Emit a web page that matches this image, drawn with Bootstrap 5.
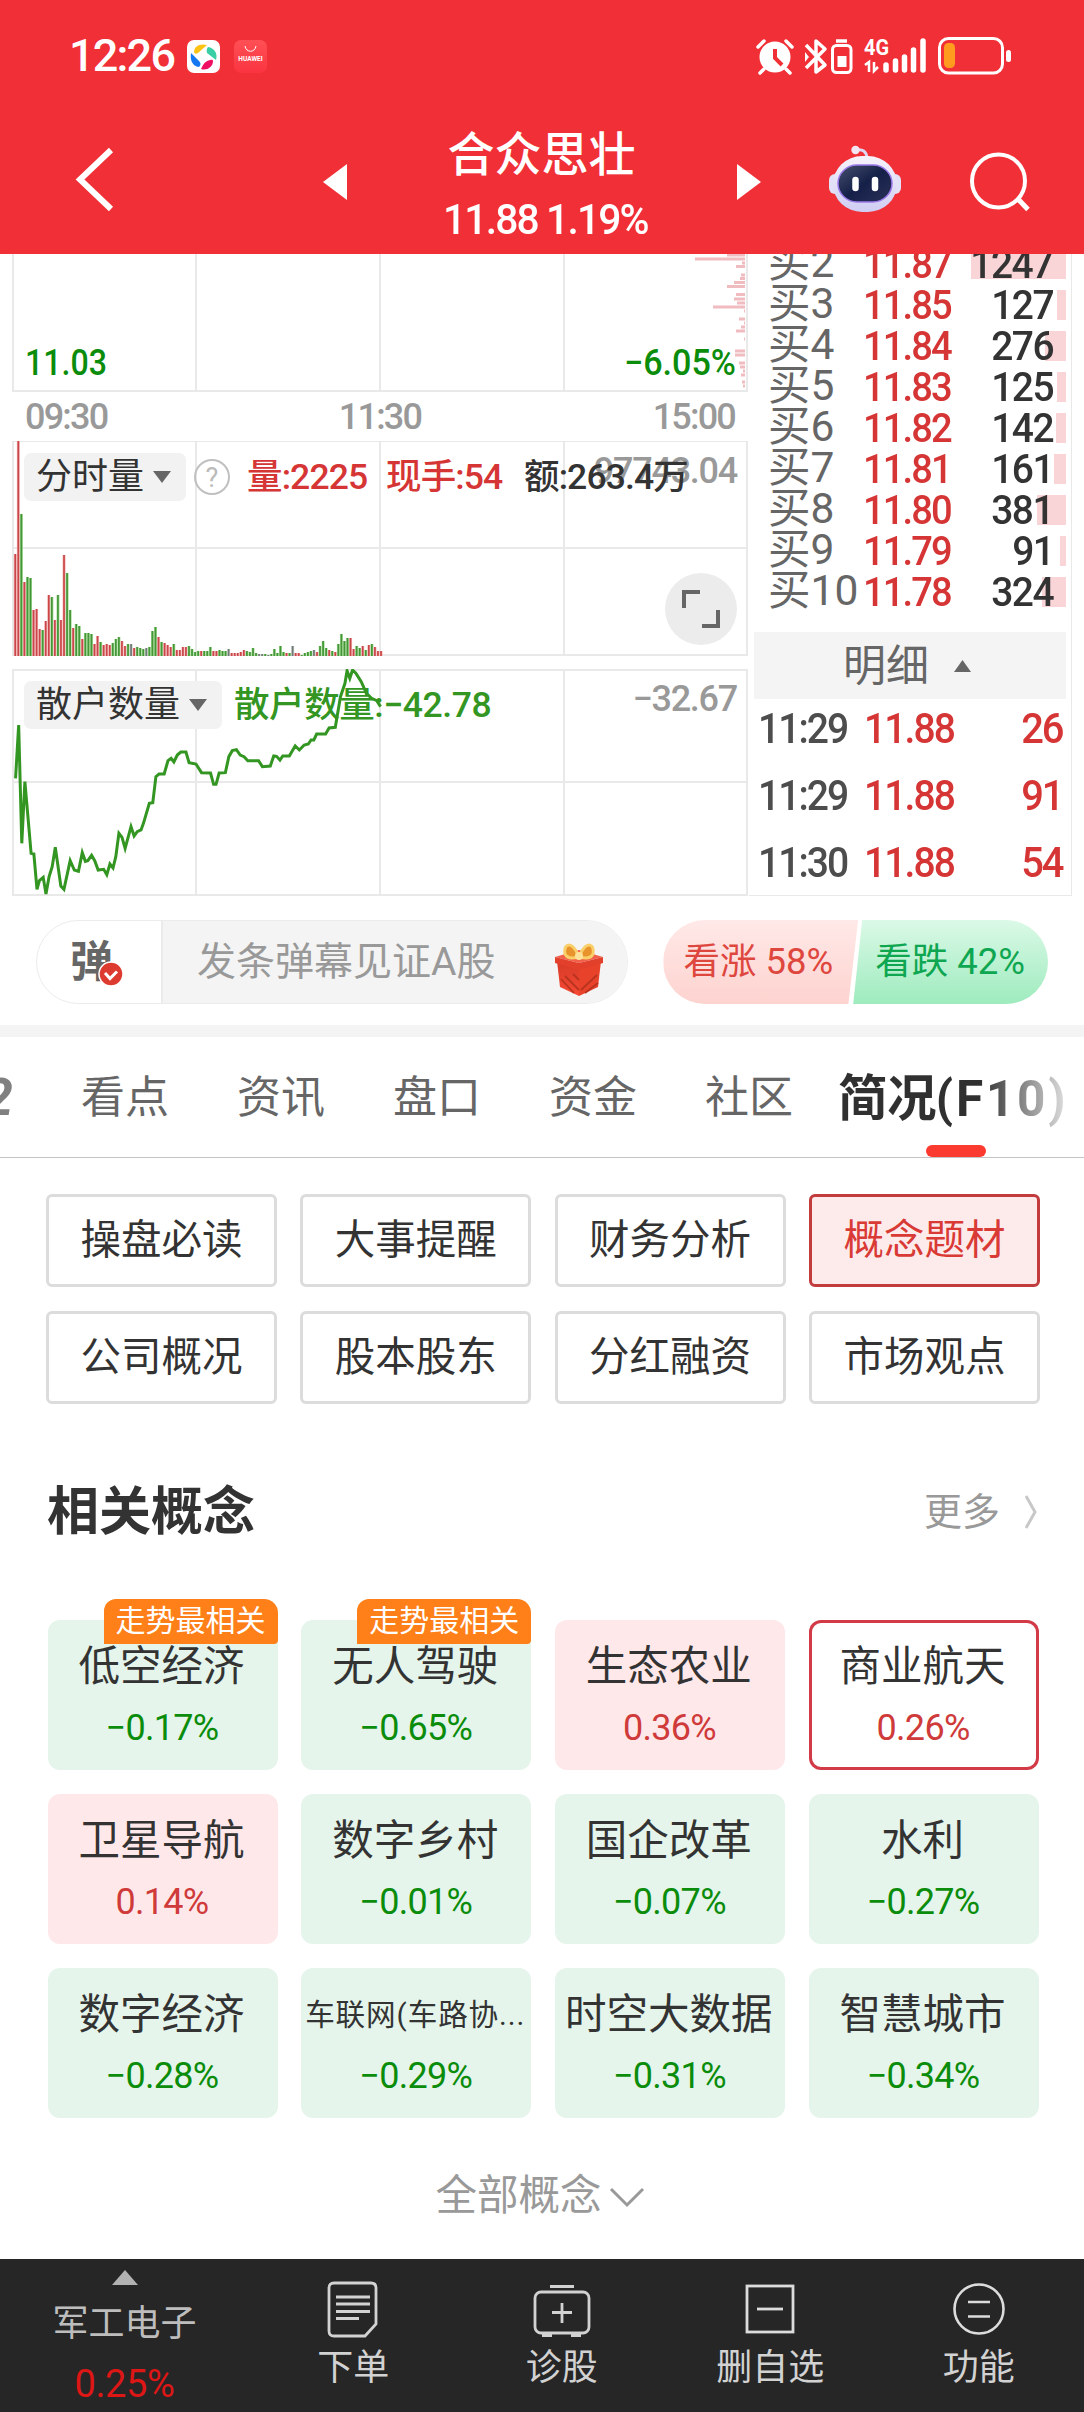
<!DOCTYPE html>
<html lang="zh-CN">
<head>
<meta charset="utf-8">
<meta name="viewport" content="width=device-width, initial-scale=1">
<title>合众思壮</title>
<link href="https://cdn.jsdelivr.net/npm/bootstrap@5.3.0/dist/css/bootstrap.min.css" rel="stylesheet">
<style>
body{width:1084px;height:2412px;overflow:hidden;background:#fff;color:#333;font-family:Roboto,"Noto Sans CJK SC",sans-serif;line-height:1}
svg{display:block;flex:none}
.cn{font-family:Roboto,"Noto Sans CJK SC",sans-serif;white-space:nowrap}
.din{font-weight:500;letter-spacing:-.05em;white-space:nowrap}
.top-red{background:#f12f36;height:254px;color:#fff;position:relative;z-index:2}
.status{height:112px;padding:0 72px 0 69px}
.clock{font-size:45px;line-height:114px;letter-spacing:-.04em;font-weight:500;width:118px}
.hw{width:33px;height:33px;border-radius:7px;background:linear-gradient(#ff5055,#fa3440);font-size:6.5px;font-weight:700;margin-left:14px;padding-top:16px;text-align:center}
.hw svg{position:absolute;left:10px;top:5px}
.navrow{height:142px}
.stock{font-size:47px;line-height:62px;font-weight:500;padding-top:12px}
.quote{font-size:42px;line-height:50px;letter-spacing:-.045em;padding-top:9px;transform:scaleX(.97)}
.market{height:642px}
.chartcol{width:749px}
.bookcol{width:323px;border-right:1px solid #e9e9e9;border-bottom:1px solid #e9e9e9;height:642px;overflow:hidden}
.axis{height:49px;color:#999;font-size:36px;line-height:50px;padding:0 14px 0 25px}
.overlay-row{position:absolute;left:24px;right:12px}
.pickr{height:48px;background:#f2f2f2;border-radius:7px;font-size:36px;line-height:50px;padding:0 15px 0 12px}
.pickr svg{margin-left:9px}
.c-red{color:#d63535}.c-green{color:#0b8c0b}.c-line{color:#349622}.c-gray{color:#999}
.vol{font-size:35.5px;line-height:50px;letter-spacing:-.025em}
.vol.c-line{letter-spacing:-.012em}
.bigval{position:absolute;right:12px;font-size:36px;line-height:40px;color:#999;letter-spacing:-.035em}
.nar{display:inline-block;transform:scaleX(.93);transform-origin:left center}
.narr{display:inline-block;transform:scaleX(.95);transform-origin:right center}
.bk{height:41px;line-height:41px;font-size:41px;padding:0 18px 0 19px;position:relative}
.bk .lv{width:95px;color:#666;font-weight:400;font-size:42.5px;letter-spacing:0;line-height:37px}
.bk .qty{margin-left:auto;z-index:1;letter-spacing:-.04em}
.bk .depth{position:absolute;right:5px;top:5px;height:30px;background:#f9d5d7}
.detail{height:67px;margin:19px 5px 0 5px;background:#f4f4f4;font-size:43px;color:#666;line-height:66px;padding-right:4px}
.tick{height:67px;line-height:60px;font-size:42px;padding:0 8px 0 9px;color:#4d4d4d}
.tick .px{width:106px;flex:none}
.danmu{height:129px;padding:24px 36px 0 36px}
.dm{width:593px;height:84px;border:1px solid #ececec;border-radius:42px;overflow:hidden}
.dm-l{width:126px;border-right:2px solid #ebebeb;font-size:43px;font-weight:700;color:#666;position:relative;padding:3px 0 0 33px;line-height:76px}
.dm-l svg{position:absolute;left:61px;top:40px}
.dm-r{flex:1;background:#f4f4f4;color:#999;font-size:39px;line-height:83px;padding-left:34px}
.vote{width:385px;height:84px;margin-left:35px;border-radius:42px;overflow:hidden;font-size:36.5px;line-height:83px}
.up,.dn{padding-left:20px}
.up{width:195px;color:#de473e;background:linear-gradient(#ffe9e8,#fdd3cf);clip-path:polygon(0 0,100% 0,185px 100%,0 100%)}
.dn{width:195px;margin-left:-5px;color:#0ea650;background:linear-gradient(#dbf9e7,#9eebbe);clip-path:polygon(9px 0,100% 0,100% 100%,0 100%);padding-left:22px}
.band{height:12px;background:#f4f4f4}
.tabsrow{height:121px;border-bottom:1px solid #c4c4c4;font-size:44px;color:#666;position:relative;line-height:122px;overflow:hidden}
.tabsrow .tb{width:156px;text-align:center;flex:none}
.tabsrow .tcur{font-size:49.5px;font-weight:700;white-space:nowrap;line-height:124px;margin-left:11px;letter-spacing:-.6px;background:linear-gradient(90deg,#303030 0,#303030 62%,#e2e2e2 100%);-webkit-background-clip:text;background-clip:text;color:transparent}
.tcur i{font-style:normal;letter-spacing:2.8px}
.tab2{width:47px;flex:none;font-size:52px;font-weight:700;font-style:italic;text-indent:-16px;color:#808080}
.tabbar{position:absolute;left:926px;bottom:0;width:60px;height:12px;border-radius:6px;background:#fb3a30}
.g4{display:grid;grid-template-columns:repeat(4,231px);column-gap:23.3px;row-gap:24px;margin-left:46px}
.fbtn{height:93px;border:3px solid #dcdcdc;border-radius:6px;font-size:40.5px;line-height:87px;text-align:center;color:#333;background:#fff;padding:0}
.fbtn.on{border-color:#c23b3d;background:#fdebec;color:#d93a35}
.sect{height:216px;padding:0 47px 0 47px}
.sect h2{font-size:52px;font-weight:700;margin:0;line-height:217px}
.more{font-size:38px;color:#999;line-height:214px}
.tiles{grid-template-columns:repeat(4,230px);column-gap:23.7px;margin-left:47.5px}
.tile{height:150px;border-radius:12px;background:#e5f5eb;color:#0b8c0b;text-align:center;position:relative}
.tile .nm{display:block;font-size:41.5px;line-height:62px;padding-top:16px;margin-left:-2px;color:#333}
.tile .nm.sm{font-size:29.6px;letter-spacing:.9px}
.tile .pc{display:block;font-size:36px;line-height:60px;letter-spacing:-.02em;margin-left:-1px}
.tile.r{background:#ffe8ea;color:#cf3a3a}
.tile.sel{background:#fff;box-shadow:inset 0 0 0 3px #d33a47}
.hot{position:absolute;right:0;top:-21px;width:174px;height:45px;line-height:44px;border-radius:12px 14px 4px 0;background:#ff8019;color:#fff;font-size:30px;z-index:1}
.allc{height:141px;font-size:41.5px;color:#999;line-height:157px;padding:14px 0 0 12px}
.foot{height:154px;background:#262626;color:#d2d2d2;font-size:36px}
.foot>div{width:208.5px;text-align:center}
.foot>div:first-child{width:249px}
.foot svg{margin:0 auto}
</style>
</head>
<body>
<header class="top-red">
 <div class="status d-flex align-items-center">
  <span class="clock">12:26</span>
  <svg width="33" height="33" viewBox="0 0 33 33"><rect width="33" height="33" rx="7" fill="#fff"/><path d="M7 12C7 7 12 3 20 5L11 13Q8 15 7 12Z" fill="#fbc414"/><path d="M21 7C27 8 31 13 29 20L20 13Q19 9 21 7Z" fill="#38cfa5"/><path d="M4 13C3 20 5 26 12 27Q15 24 12 21Z" fill="#1478f0"/><path d="M26 21C26 27 20 31 14 29Q17 21 23 20Q26 19 26 21Z" fill="#ee0e62"/></svg>
  <div class="hw position-relative">HUAWEI<svg width="13" height="8" viewBox="0 0 13 8"><path d="M1 1C2 8 11 8 12 1" fill="none" stroke="#fff"/></svg></div>
  <svg class="ms-auto" width="257" height="40" viewBox="754 36 257 40" fill="none" stroke="#fff">
   <circle cx="774" cy="57" r="15.5" fill="#fff" stroke="none"/><path d="M757 47L763 41M785 41L791 47M763 69L759 73M785 69L789 73" stroke-width="3.5" stroke-linecap="round"/><path d="M774 49V58L781 65" stroke="#f12f36" stroke-width="4"/>
   <path d="M805 45L824 65L815 72V41L824 49L805 68" stroke-width="3.5" stroke-linejoin="round"/><path d="M804 52v10l4-5z" fill="#fff" stroke="none"/>
   <rect x="831.5" y="45.500" width="18.500" height="27" rx="4" stroke-width="3"/><path d="M835 41H846" stroke-width="3.5"/><rect x="836.500" y="56" width="9" height="11" fill="#fff" stroke="none"/>
   <text x="863" y="55" font-family="Roboto" font-size="22" font-weight="700" fill="#fff" stroke="none" textLength="25" lengthAdjust="spacingAndGlyphs">4G</text>
   <path d="M864 65L868 62V72M873 62V71L877 67" stroke-width="2.500"/>
   <path d="M885 65V70M894.500 61V70M903.500 57V70M912.500 50V70M922 41V70" stroke-width="5.500" stroke-linecap="round"/>
   <rect x="938.500" y="38.500" width="63" height="34.500" rx="9" stroke-width="3"/><rect x="943" y="43" width="11" height="25" rx="4.500" fill="#ff9c20" stroke="none"/><rect x="1005" y="50" width="5" height="12" rx="2.500" fill="#fff" stroke="none"/>
  </svg>
 </div>
 <div class="navrow d-flex">
  <svg width="440" height="142" viewBox="0 112 440 142" fill="none"><path d="M111 150L80 179.500L111 209" stroke="#fff" stroke-width="6"/><path d="M347 164V200L323 182z" fill="#fff"/></svg>
  <div class="text-center" style="width:203px"><div class="stock cn">合众思壮</div><div class="quote din">11.88 1.19%</div></div>
  <svg width="441" height="142" viewBox="643 112 441 142" fill="none">
   <defs><linearGradient id="hd" x1="0" y1="0" x2="0" y2="1"><stop offset="0" stop-color="#f7f3fb"/><stop offset="1" stop-color="#cfcdf3"/></linearGradient><linearGradient id="vs" x1="0" y1="0" x2="1" y2="1"><stop offset="0" stop-color="#47506e"/><stop offset=".5" stop-color="#152048"/><stop offset="1" stop-color="#2b3158"/></linearGradient></defs>
   <path d="M737 164V200L761 182z" fill="#fff"/>
   <path d="M856 150Q866 148 867 158" stroke="#ded6f0" stroke-width="3"/><circle cx="855.500" cy="150" r="4.200" fill="#f3e6f2"/>
   <rect x="829" y="174" width="12" height="20" rx="6" fill="#e3e1f7"/><rect x="889" y="174" width="12" height="20" rx="6" fill="#e3e1f7"/>
   <rect x="833" y="156" width="64" height="56" rx="29" ry="28" fill="url(#hd)"/><rect x="838" y="165" width="54" height="37" rx="19" fill="url(#vs)" stroke="#9a78e8" stroke-width="1.500"/>
   <path d="M855.500 180V188M875 180V188" stroke="#fff" stroke-width="6.500" stroke-linecap="round"/>
   <circle cx="998.500" cy="181" r="26.500" stroke="#fff" stroke-width="4"/><path d="M1018 199L1028 209.500" stroke="#fff" stroke-width="5"/>
  </svg>
 </div>
</header>

<main>
<section class="market d-flex">
 <div class="chartcol">
  <svg id="p1" width="749" height="138" viewBox="0 254 749 138" fill="none">
   <path d="M13 254V391M196 254V391M380 254V391M564 254V391M747 254V391M12 391H748" stroke="#e9e9e9" stroke-width="2"/>
   <g id="profile" fill="#f0bcc0"></g>
   <g font-family="Roboto" font-size="36" font-weight="500" fill="#0b8c0b"><text x="25" y="374.500" textLength="82" lengthAdjust="spacingAndGlyphs">11.03</text><text x="624" y="374.500" textLength="112" lengthAdjust="spacingAndGlyphs">−6.05%</text></g>
  </svg>
  <div class="axis d-flex justify-content-between din"><span>09:30</span><span>11:30</span><span>15:00</span></div>
  <div class="position-relative">
   <svg width="749" height="228" viewBox="0 441 749 228" fill="none">
    <path d="M13 441V655M196 441V655M380 441V655M564 441V655M747 441V655M12 441H748M12 548H748M12 655H748" stroke="#e9e9e9" stroke-width="2"/>
    <g id="bars"></g>
    <circle cx="701" cy="609" r="36" fill="#ececec"/><path d="M684 608V592H700M702 626H718V610" stroke="#666" stroke-width="4"/>
   </svg>
   <div class="bigval din" style="top:10px">97743.04</div>
   <div class="overlay-row d-flex align-items-center" style="top:11px">
    <div class="pickr d-flex align-items-center cn">分时量<svg width="18" height="12"><path d="M0 0H18L9 12z" fill="#666"/></svg></div>
    <svg width="36" height="36" viewBox="0 0 36 36" style="margin-left:8px"><circle cx="18" cy="18" r="17" fill="none" stroke="#c0c0c0" stroke-width="2"/><text x="18" y="27.500" text-anchor="middle" font-family="Roboto" font-size="27" fill="#bbb">?</text></svg>
    <span class="vol din c-red" style="margin-left:17px;width:139px">量:2225</span><span class="vol din c-red" style="width:138px">现手:54</span><span class="vol din">额:263.4万</span>
   </div>
  </div>
  <div class="position-relative">
   <svg width="749" height="227" viewBox="0 669 749 227" fill="none">
    <path d="M13 669V895M196 669V895M380 669V895M564 669V895M747 669V895M12 670H748M12 782H748M12 895H748" stroke="#e9e9e9" stroke-width="2"/>
   </svg>
   <div class="bigval din" style="top:10px">−32.67</div>
   <div class="overlay-row d-flex align-items-center" style="top:11px">
    <div class="pickr d-flex align-items-center cn">散户数量<svg width="18" height="12"><path d="M0 0H18L9 12z" fill="#666"/></svg></div>
    <span class="vol din c-line" style="margin-left:12px">散户数量:−42.78</span>
   </div>
   <svg class="position-absolute top-0 start-0" width="749" height="227" viewBox="0 669 749 227" fill="none">
    <g transform="translate(0 640) scale(.34566 .33333)"><polyline vector-effect="non-scaling-stroke" stroke="#349622" stroke-width="3" points="45,415 54,255 63,610 72,425 90,640 98,642 107,748 114,722 125,712 133,762 142,710 151,680 160,622 176,738 185,748 203,662 215,690 227,694 238,638 247,664 254,662 265,646 274,662 284,690 300,688 309,704 318,672 327,684 335,650 344,580 353,592 362,625 379,560 388,588 397,575 408,570 415,550 432,490 442,488 451,410 460,402 475,402 486,362 495,355 503,366 513,345 523,336 538,336 547,368 567,372 583,398 609,399 618,433 625,433 634,399 652,398 662,350 672,332 684,329 695,345 706,350 717,362 748,362 759,380 782,378 792,348 800,349 810,360 818,348 837,348 854,318 866,330 880,315 892,312 900,300 908,300 916,282 942,282 952,264 970,262 985,170 998,130 1004,92 1012,115 1020,90 1030,100 1045,125 1060,160 1075,175 1090,182 1101,200"/></g>
   </svg>
  </div>
 </div>
 <div class="bookcol">
  <div id="book" style="margin-top:-10px"></div>
  <div class="detail d-flex align-items-center justify-content-center cn"><span>明细</span><svg width="17" height="12" style="margin-left:25px;margin-right:2px"><path d="M0 12H17L8.500 0z" fill="#666"/></svg></div>
  <div class="tick d-flex din"><span class="px"><span class="nar">11:29</span></span><span class="c-red nar">11.88</span><span class="c-red ms-auto narr">26</span></div>
  <div class="tick d-flex din"><span class="px"><span class="nar">11:29</span></span><span class="c-red nar">11.88</span><span class="c-red ms-auto narr">91</span></div>
  <div class="tick d-flex din"><span class="px"><span class="nar">11:30</span></span><span class="c-red nar">11.88</span><span class="c-red ms-auto narr">54</span></div>
 </div>
</section>

<section class="danmu d-flex">
 <div class="dm d-flex cn">
  <div class="dm-l">弹<svg width="26" height="26"><circle cx="13" cy="13" r="12" fill="#dd3a30" stroke="#fff" stroke-width="1.500"/><path d="M7 12L12 17.500L19 10.500" fill="none" stroke="#fff" stroke-width="3"/></svg></div>
  <div class="dm-r d-flex align-items-center"><span>发条弹幕见证A股</span>
   <svg width="48" height="54" viewBox="0 0 48 54" style="margin:15px 0 0 60px"><defs><linearGradient id="gf" x1="0" y1="0" x2="0" y2="1"><stop offset="0" stop-color="#d63a26"/><stop offset="1" stop-color="#f64a36"/></linearGradient></defs><path d="M2 18L24 24V53L5 44z" fill="url(#gf)"/><path d="M46 18L24 24V53L43 44z" fill="#e8432a"/><path d="M0 14L24 7L48 14L24 20z" fill="#f2604c"/><path d="M0 14L24 20L48 14V20L24 27L0 20z" fill="#e2402b"/><path d="M10 33L24 47M6 36L19 50M18 31L24 37M42 32L26 47M43 40L30 50" stroke="#b8341e" stroke-width="1.800"/><path d="M23 12C17 -2 8 0 10 11Q13 17 23 14ZM25 12C31 -2 40 0 38 11Q35 17 25 14Z" fill="#e9932c" stroke="#f9cf6a" stroke-width="3"/><circle cx="24" cy="13" r="4" fill="#ffe29a"/></svg>
  </div>
 </div>
 <div class="vote d-flex cn"><div class="up">看涨 58%</div><div class="dn">看跌 42%</div></div>
</section>
<div class="band"></div>

<nav class="tabsrow d-flex cn">
 <span class="tab2">2</span><span class="tb">看点</span><span class="tb">资讯</span><span class="tb">盘口</span><span class="tb">资金</span><span class="tb">社区</span><span class="tcur">简况<i>(F10)</i></span>
 <span class="tabbar"></span>
</nav>

<section class="g4 cn" style="padding-top:36px">
 <button class="fbtn">操盘必读</button><button class="fbtn">大事提醒</button><button class="fbtn">财务分析</button><button class="fbtn on">概念题材</button>
 <button class="fbtn">公司概况</button><button class="fbtn">股本股东</button><button class="fbtn">分红融资</button><button class="fbtn">市场观点</button>
</section>

<div class="sect d-flex justify-content-between cn"><h2>相关概念</h2><div class="more d-flex align-items-center">更多<svg width="12" height="34" style="margin-left:25px"><path d="M1 1L10 17L1 33" fill="none" stroke="#c8c8c8" stroke-width="3"/></svg></div></div>

<section class="g4 tiles cn">
 <div class="tile"><span class="hot">走势最相关</span><span class="nm">低空经济</span><span class="pc">−0.17%</span></div>
 <div class="tile"><span class="hot">走势最相关</span><span class="nm">无人驾驶</span><span class="pc">−0.65%</span></div>
 <div class="tile r"><span class="nm">生态农业</span><span class="pc">0.36%</span></div>
 <div class="tile r sel"><span class="nm">商业航天</span><span class="pc">0.26%</span></div>
 <div class="tile r"><span class="nm">卫星导航</span><span class="pc">0.14%</span></div>
 <div class="tile"><span class="nm">数字乡村</span><span class="pc">−0.01%</span></div>
 <div class="tile"><span class="nm">国企改革</span><span class="pc">−0.07%</span></div>
 <div class="tile"><span class="nm">水利</span><span class="pc">−0.27%</span></div>
 <div class="tile"><span class="nm">数字经济</span><span class="pc">−0.28%</span></div>
 <div class="tile"><span class="nm sm">车联网(车路协...</span><span class="pc">−0.29%</span></div>
 <div class="tile"><span class="nm">时空大数据</span><span class="pc">−0.31%</span></div>
 <div class="tile"><span class="nm">智慧城市</span><span class="pc">−0.34%</span></div>
</section>

<div class="allc d-flex justify-content-center align-items-center cn">全部概念<svg width="36" height="22" style="margin:4px 16px 0 7px"><path d="M2 2L18 18L34 2" fill="none" stroke="#999" stroke-width="3"/></svg></div>
</main>

<footer class="foot d-flex cn">
 <div><svg width="26" height="15" style="margin-top:11px"><path d="M0 15H26L13 0z" fill="#b2b2b2"/></svg><div style="line-height:60px;margin-top:9px;color:#bdbdbd">军工电子</div><div style="line-height:60px;color:#dd1616;font-size:38px;letter-spacing:-.01em">0.25%</div></div>
 <div><svg width="52" height="58" viewBox="0 0 52 58" style="margin-top:22px" fill="none" stroke="#d2d2d2" stroke-width="2.800"><path d="M7 2H44Q49 2 49 7V43L38 55H7Q2 55 2 50V7Q2 2 7 2z"/><path d="M9 16H43M9 23H43M9 30.500H43M9 37.500H32"/></svg><div style="line-height:60px;margin-top:-1px">下单</div></div>
 <div><svg width="60" height="58" viewBox="0 0 60 58" style="margin-top:22px" fill="none" stroke="#d2d2d2" stroke-width="2.800"><rect x="3" y="11" width="54" height="41" rx="6"/><path d="M18 5.500H42M30 22V42M20 31.500H40M10 54.500H20M39 54.500H49"/></svg><div style="line-height:60px;margin-top:-1px">诊股</div></div>
 <div><svg width="52" height="58" viewBox="0 0 52 58" style="margin-top:22px" fill="none" stroke="#dcdcdc" stroke-width="2.800"><rect x="3" y="5" width="46" height="46"/><path d="M13 28H39"/></svg><div style="line-height:60px;margin-top:-1px">删自选</div></div>
 <div><svg width="54" height="58" viewBox="0 0 54 58" style="margin-top:22px" fill="none" stroke="#dcdcdc" stroke-width="2.600"><circle cx="27" cy="28" r="24.500"/><path d="M16 21H38M16 35.500H38"/></svg><div style="line-height:60px;margin-top:-1px">功能</div></div>
</footer>

<script src="https://cdn.jsdelivr.net/npm/bootstrap@5.3.0/dist/js/bootstrap.bundle.min.js"></script>
<script>
// Volume per minute: height followed by direction (r up, g down, k flat)
var vol='102r 216r 142g 74r 79g 78g 46r 47r 27r 26g 35r 61r 59g 36r 61g 36r 101r 83g 46g 28r 32g 30g 17r 23g 23g 22g 12r 20r 14g 11r 12r 11r 13g 17g 19g 15r 10r 12g 12k 8r 9g 8g 7g 8k 9g 25g 29g 19r 14g 13r 11r 9r 12g 6r 6r 9r 9r 10g 7g 4g 5g 5r 5g 5g 9g 5r 5r 6g 5g 5g 7k 3r 3r 3r 4r 6r 5g 4g 8g 3g 2k 2k 2g 1k 2g 7g 3g 10g 4g 3r 3g 10k 3r 3r 1g 3g 4g 5g 6k 4r 10g 15g 8g 6r 5g 4r 12g 22g 15g 18g 18r 7r 10g 8g 10r 6g 11r 12g 9r 5r 5r'.split(' ');
var col={r:['#c9474a','#f6b9b9'],g:['#449638','#a9dd9b'],k:['#6e7a74','#d0d0d0']};
document.getElementById('bars').innerHTML=vol.map(function(v,i){
  var h=parseInt(v),c=col[v.slice(-1)],x=14.2+i*3.048,y=656-h;
  return '<rect x="'+(x-.4)+'" y="'+y+'" width="3" height="'+h+'" fill="'+c[1]+'"/><rect x="'+(x+.2)+'" y="'+y+'" width="1.700" height="'+h+'" fill="'+c[0]+'"/>';
}).join('');
// Price distribution: y position and bar length
var prof=[[255,18],[259,50],[263,3],[266.5,9],[275,4],[278.500,5],[282.500,11],[286.500,18],[294.500,9],[299,11],[303,8],[307,32],[311,1],[319,6],[323,1],[327,4],[331,9],[339,1],[351,10],[355,10],[363,6],[367,5],[371,2],[375,4],[382,3],[386,2]];
document.getElementById('profile').innerHTML=prof.map(function(p){
  return '<rect x="'+(745-p[1])+'" y="'+(p[0]-1.500)+'" width="'+p[1]+'" height="3"/>';
}).join('');
// Bid levels: level, price, quantity, depth width
var book=[[2,'11.87',1247,95],[3,'11.85',127,9],[4,'11.84',276,21],[5,'11.83',125,9],[6,'11.82',142,10],[7,'11.81',161,12],[8,'11.80',381,29],[9,'11.79',91,6],[10,'11.78',324,24]];
document.getElementById('book').innerHTML=book.map(function(b){
  return '<div class="bk d-flex din"><span class="depth" style="width:'+b[3]+'px"></span><span class="lv">买'+b[0]+'</span><span class="c-red nar">'+b[1]+'</span><span class="qty narr">'+b[2]+'</span></div>';
}).join('');
</script>
</body>
</html>
